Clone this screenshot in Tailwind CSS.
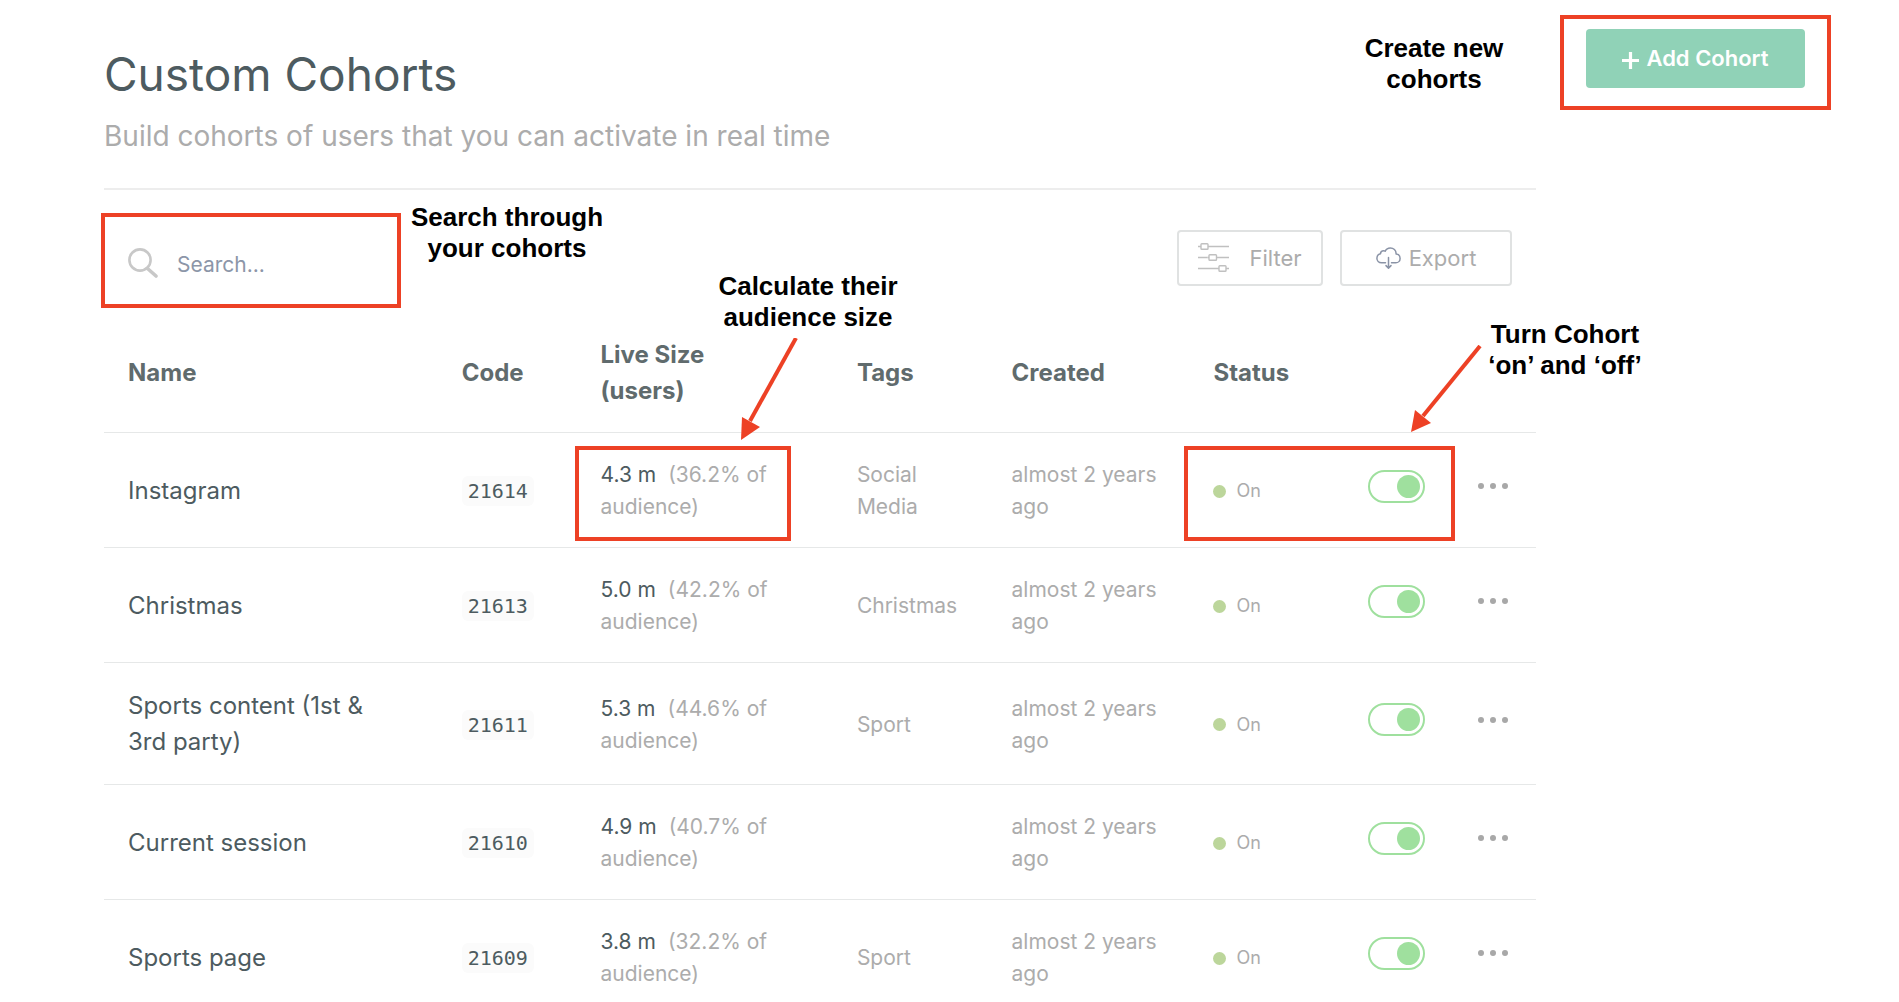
<!DOCTYPE html>
<html lang="en">
<head>
<meta charset="utf-8">
<meta name="viewport" content="width=device-width, initial-scale=1">
<title>Custom Cohorts</title>
<script src="https://cdn.jsdelivr.net/npm/@tailwindcss/browser@4"></script>
</head>
<body class="h-screen overflow-hidden bg-white font-['Inter',sans-serif] text-[#acacac]">
<div class="relative grid grid-cols-[minmax(0,1fr)_271px] items-start gap-6 pl-26 pr-17">

  <main>
    <header class="border-b-2 border-[#ededed] pt-[46px] pb-[34px]">
      <h1 class="text-[46px] leading-[56px] text-[#4d5b60]">Custom Cohorts</h1>
      <p class="mt-4 text-[28px] leading-9">Build cohorts of users that you can activate in real time</p>
    </header>

    <!-- Toolbar -->
    <div class="flex h-[122px] items-start justify-between pr-6 pl-6 pt-10">
      <label class="flex h-[66px] items-center gap-[19px]">
        <svg class="h-[30px] w-[30px]" viewBox="0 0 30 30" fill="none" stroke="#c8c8c8"><circle cx="12" cy="12" r="10.6" stroke-width="2.6"/><path d="M19.5 20.5 28 28" stroke-width="3.6" stroke-linecap="round"/></svg>
        <input type="text" placeholder="Search..." aria-label="Search cohorts" class="mt-1 w-52 bg-transparent text-[21px] outline-none placeholder:text-[#8c96a8]">
      </label>
      <div class="flex gap-[17px]">
        <button class="flex h-14 w-[146px] items-center justify-center gap-5 rounded-sm border-2 border-[#e0e2e2] text-[22px]">
          <svg class="h-[30px] w-[31px]" viewBox="0 0 31 30" fill="none" stroke="#c0c0c0" stroke-width="1.4"><path d="M0 3.500h3M10 3.500h21M0 14.500h9.500M18.500 14.500h12.500M0 25.500h21M28 25.500h3"/><rect x="3" y=".7" width="7" height="5.600" rx=".8"/><rect x="11" y="11.700" width="7.500" height="5.600" rx=".8"/><path d="M9.500 14.500h1.500"/><rect x="21" y="22.700" width="7" height="5.600" rx=".8"/></svg>
          Filter
        </button>
        <button class="flex h-14 w-[172px] items-center justify-center gap-2 rounded-sm border-2 border-[#e0e2e2] text-[22px]">
          <svg class="h-[22px] w-[25px]" viewBox="0 0 25 22" fill="none" stroke="#8a93a6" stroke-width="1.5" stroke-linecap="round" stroke-linejoin="round"><path d="M9.500 15.800H5.500C2.800 15.800 .9 13.800 .9 11.300c0-2.200 1.500-4 3.500-4.500C4.600 4.900 6 3.700 7.600 3.700c.6 0 1.200.2 1.600.5C10.100 2.200 12 .9 14.300 .9c3.300 0 5.800 2.500 5.800 5.700v.5c2.300.2 4 2 4 4.300 0 2.500-1.900 4.400-4.300 4.400H15.500M12.500 10.500V20.800M10 18.600l2.500 2.500 2.500-2.500"/></svg>
          Export
        </button>
      </div>
    </div>

    <table class="w-full table-fixed border-collapse text-left text-[21px] leading-8 [&_td]:pt-[26px] [&_td]:pb-6 [&_td]:pl-6 [&_td:first-child]:pt-[25px] [&_th]:pt-[25px] [&_th]:pb-[23px] [&_th]:pl-6 [&_tr]:border-b [&_tr]:border-[#e6e8e8]">
      <colgroup>
        <col class="w-[23.3%]"><col class="w-[9.7%]"><col class="w-[17.9%]"><col class="w-[10.8%]"><col class="w-[14.1%]"><col class="w-[10.8%]"><col class="w-[7.7%]"><col class="w-[5.7%]">
      </colgroup>
      <thead class="text-2xl leading-9 text-[#606b6d]">
        <tr>
          <th scope="col">Name</th><th scope="col">Code</th><th scope="col">Live Size<br>(users)</th><th scope="col">Tags</th><th scope="col">Created</th><th scope="col">Status</th><td></td><td></td>
        </tr>
      </thead>
      <tbody id="rows"></tbody>
    </table>
  </main>

  <aside class="mt-[15px] border-4 border-[#ed4125] px-[22px] pt-[10px] pb-[18px]">
    <button class="flex h-[59px] w-full items-center justify-center gap-[7px] rounded-sm bg-[#90d2b7] text-[22px] font-semibold text-white">
      <svg class="mt-1 h-[17px] w-[17px]" viewBox="0 0 17 17" stroke="#fff" stroke-width="3.2"><path d="M8.500 0v17M0 8.500h17"/></svg>
      Add Cohort
    </button>
  </aside>

  <!-- Callouts laid over the page -->
  <div class="pointer-events-none absolute inset-0 text-center font-['Liberation_Sans',sans-serif] text-[26px] leading-[31px] font-bold text-black">
    <div class="absolute top-[213px] left-[101px] h-[95px] w-[300px] border-4 border-[#ed4125]"></div>
    <div class="absolute top-[446px] left-[575px] h-[95px] w-[216px] border-4 border-[#ed4125]"></div>
    <div class="absolute top-[446px] left-[1184px] h-[95px] w-[271px] border-4 border-[#ed4125]"></div>
    <p class="absolute top-[33px] left-[1354px] w-40">Create new cohorts</p>
    <p class="absolute top-[202px] left-[407px] w-50">Search through your cohorts</p>
    <p class="absolute top-[271px] left-[708px] w-50">Calculate their audience size</p>
    <p class="absolute top-[319px] left-[1480px] w-[170px]">Turn Cohort ‘on’ and ‘off’</p>
    <svg class="absolute top-[338px] left-[740px] h-[102px] w-[59px]" viewBox="0 0 59 102"><path d="M56 0 10 83" stroke="#ed4125" stroke-width="4"/><path d="M1 102 2 79 20 89z" fill="#ed4125"/></svg>
    <svg class="absolute top-[345px] left-[1410px] h-[88px] w-[73px]" viewBox="0 0 73 88"><path d="M70 1 13 71" stroke="#ed4125" stroke-width="4"/><path d="M1 87 5 65 21 78z" fill="#ed4125"/></svg>
  </div>
</div>

<script>
const cohorts = [
  ["Instagram", "21614", "4.3 m", "36.2%", "Social Media"],
  ["Christmas", "21613", "5.0 m", "42.2%", "Christmas"],
  ["Sports content (1st & 3rd party)", "21611", "5.3 m", "44.6%", "Sport"],
  ["Current session", "21610", "4.9 m", "40.7%", ""],
  ["Sports page", "21609", "3.8 m", "32.2%", "Sport"],
];
document.getElementById("rows").innerHTML = cohorts.map(([name, code, size, share, tag]) => `
  <tr>
    <td class="pr-10 text-2xl leading-9 text-[#4d5b60]">${name.replace("&", "&amp;")}</td>
    <td><code class="inline-block rounded-md bg-[#fbfbfb] px-[6px] font-['DejaVu_Sans_Mono',monospace] text-xl leading-[30px] text-[#4d5b60]">${code}</code></td>
    <td class="pr-12"><span class="mr-3 text-[#4d5b60]">${size}</span><span>(${share} of</span> audience)</td>
    <td class="pr-4">${tag}</td>
    <td class="pr-6">almost 2 years ago</td>
    <td><span class="flex items-center gap-[10px] text-lg"><span class="h-[13px] w-[13px] rounded-full bg-[#bcd69b]"></span>On</span></td>
    <td><input type="checkbox" role="switch" checked aria-label="${name.replace("&", "&amp;")} on" class="-mt-[10px] flex h-[33px] w-[57px] appearance-none items-center justify-end rounded-full border-2 border-[#9fe09e] pr-[3px] before:h-[23px] before:w-[23px] before:rounded-full before:bg-[#9fe09e]"></td>
    <td><button aria-label="More actions" class="-mt-[10px] flex h-8 items-center gap-[6px]"><span class="h-[6px] w-[6px] rounded-full bg-[#a8a8a8]"></span><span class="h-[6px] w-[6px] rounded-full bg-[#a8a8a8]"></span><span class="h-[6px] w-[6px] rounded-full bg-[#a8a8a8]"></span></button></td>
  </tr>`).join("");
</script>
</body>
</html>
